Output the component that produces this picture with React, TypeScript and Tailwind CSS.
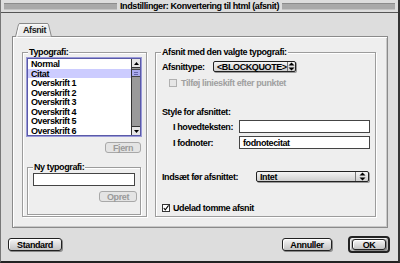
import React from "react";

const T = "text-[9px] font-bold tracking-[-0.4px] leading-[10px] whitespace-nowrap";

function Arrows() {
  return (
    <svg width="7" height="9" viewBox="0 0 7 9">
      <path d="M3.5 0.5 L6.5 3.5 L0.5 3.5 Z" fill="#000" />
      <path d="M3.5 8.5 L6.5 5.5 L0.5 5.5 Z" fill="#000" />
    </svg>
  );
}

function Popup({ cls, text }: { cls: string; text: string }) {
  return (
    <div className={`${cls} h-[11px] flex items-stretch rounded-[2px] border border-[#222] bg-gradient-to-b from-[#f4f4f4] to-[#cfcfcf] shadow-[1px_1px_0_#999]`}>
      <div className={`${T} flex-1 pl-[3px] flex items-center`}>{text}</div>
      <div className="w-[13px] border-l border-[#777] flex items-center justify-center">
        <Arrows />
      </div>
    </div>
  );
}

function Btn({ cls, text, disabled }: { cls: string; text: string; disabled?: boolean }) {
  return (
    <div
      className={`${cls} ${T} flex items-center justify-center rounded-[3px] border ${
        disabled
          ? "border-[#a8a8a8] text-[#9a9a9a] bg-[#e4e4e4]"
          : "border-[#222] text-black bg-gradient-to-b from-[#f6f6f6] to-[#c4c4c4] shadow-[1px_1px_0_#888,inset_1px_1px_0_#fff]"
      }`}
    >
      {text}
    </div>
  );
}

function Group({ cls, label, children }: { cls: string; label: string; children?: React.ReactNode }) {
  return (
    <div className={`${cls} flex flex-col border border-[#9c9c9c] shadow-[1px_1px_0_#fff,inset_1px_1px_0_#fff]`}>
      <div className={`${T} -mt-[6px] ml-[5px] px-[1px] self-start bg-[#eeeeee]`}>{label}</div>
      {children}
    </div>
  );
}

const items = ["Normal", "Citat", "Overskrift 1", "Overskrift 2", "Overskrift 3", "Overskrift 4", "Overskrift 5", "Overskrift 6"];

export default function App() {
  return (
    <div className="w-[400px] h-[263px] bg-[#dddddd] flex flex-col border-l border-l-[#777] border-r-2 border-r-[#333] border-b-2 border-b-[#222] [font-family:'Liberation_Sans',Arial,sans-serif] text-black overflow-hidden">
      {/* title bar */}
      <div className="h-[13px] shrink-0 flex items-center border-b border-[#555] px-[3px]">
        <div className="flex-1 h-[7px] bg-[#a9a9a9] border-t border-[#8c8c8c] border-b border-b-[#c4c4c4]" />
        <div className={`${T} px-[3px]`}>Indstillinger: Konvertering til html (afsnit)</div>
        <div className="flex-1 h-[7px] bg-[#a9a9a9] border-t border-[#8c8c8c] border-b border-b-[#c4c4c4]" />
      </div>

      {/* tab */}
      <div className="mt-[10px] ml-[14px] h-[14px] flex relative z-10 -mb-[1px]">
        <div className="relative w-[37px] h-[14px] flex items-center justify-center">
          <svg className="absolute inset-0" width="37" height="14" viewBox="0 0 37 14">
            <path d="M0.5 14 L3.5 1.5 Q3.8 0.5 5 0.5 L32 0.5 Q33.2 0.5 33.5 1.5 L36.5 14 Z" fill="#eeeeee" stroke="#888" />
            <path d="M1.8 14 L4.5 2.2 L32 1.5" fill="none" stroke="#fff" />
          </svg>
          <span className={`${T} relative text-[#222] pl-[2px]`}>Afsnit</span>
        </div>
      </div>

      {/* panel */}
      <div className="ml-[11px] w-[376px] h-[192px] bg-[#eeeeee] border border-[#8a8a8a] shadow-[inset_1px_1px_0_#fff,inset_-1px_-1px_0_#c8c8c8] flex gap-[8px] pl-[9px] pt-[15px]">
        {/* left group */}
        <Group cls="w-[125px] h-[165px]" label="Typografi:">
          <div className="mt-[1px] ml-[4px] w-[114px] h-[78px] border border-[#5a5aa8] shadow-[0_0_0_1px_#9a9ad8] bg-white flex">
            <div className="flex-1 flex flex-col">
              {items.map((it) => (
                <div key={it} className={`${T} h-[9.5px] leading-[9.5px] pl-[3px] ${it === "Citat" ? "bg-[#ccccff]" : ""}`}>
                  {it}
                </div>
              ))}
            </div>
            <div className="w-[9px] flex flex-col border-l border-[#333] bg-[#9a9a9a]">
              <div className="h-[9px] bg-[#e6e6e6] border-b border-[#333] flex items-center justify-center">
                <svg width="5" height="3" viewBox="0 0 5 3"><path d="M2.5 0 L5 3 L0 3 Z" fill="#000" /></svg>
              </div>
              <div className="mt-[1px] h-[8px] mx-[0px] bg-[#aaaaee] border-y border-[#444] flex flex-col justify-center items-center gap-[1px]">
                <div className="w-[4px] h-px bg-[#6666aa]" />
                <div className="w-[4px] h-px bg-[#6666aa]" />
              </div>
              <div className="flex-1" />
              <div className="h-[9px] bg-[#e6e6e6] border-t border-[#333] flex items-center justify-center">
                <svg width="5" height="3" viewBox="0 0 5 3"><path d="M0 0 L5 0 L2.5 3 Z" fill="#000" /></svg>
              </div>
            </div>
          </div>
          <div className="mt-[6px] flex justify-end pr-[5px]">
            <Btn cls="w-[36px] h-[11px]" text="Fjern" disabled />
          </div>
          <Group cls="mt-[14px] ml-[4px] w-[114px] h-[48px]" label="Ny typografi:">
            <div className="mt-[1px] ml-[5px] w-[102px] h-[13px] bg-white border border-[#444]" />
            <div className="mt-[5px] flex justify-end pr-[3px]">
              <Btn cls="w-[38px] h-[11px]" text="Opret" disabled />
            </div>
          </Group>
        </Group>

        {/* right group */}
        <Group cls="w-[221px] h-[165px]" label="Afsnit med den valgte typografi:">
          <div className="mt-[4px] pl-[6px] flex items-center">
            <div className={`${T} w-[51px]`}>Afsnittype:</div>
            <Popup cls="w-[83px]" text="<BLOCKQUOTE>" />
          </div>
          <div className="mt-[6px] pl-[13px] flex items-center gap-[4px]">
            <div className="w-[8px] h-[8px] border border-[#b0b0b0] bg-[#e6e6e6]" />
            <div className={`${T} text-[#a0a0a0]`}>Tilføj linieskift efter punktet</div>
          </div>
          <div className={`${T} mt-[19px] pl-[6px]`}>Style for afsnittet:</div>
          <div className="mt-[3px] pl-[17px] flex items-center">
            <div className={`${T} w-[66px]`}>I hovedteksten:</div>
            <div className="w-[131px] h-[13px] bg-white border border-[#444]" />
          </div>
          <div className="mt-[3px] pl-[17px] flex items-center">
            <div className={`${T} w-[66px]`}>I fodnoter:</div>
            <div className={`${T} w-[131px] h-[13px] bg-white border border-[#444] pl-[3px] flex items-center`}>fodnotecitat</div>
          </div>
          <div className="mt-[22px] pl-[6px] flex items-center">
            <div className={`${T} w-[94px]`}>Indsæt før afsnittet:</div>
            <Popup cls="w-[113px]" text="Intet" />
          </div>
          <div className="mt-[21px] pl-[6px] flex items-center gap-[3px]">
            <div className="w-[8px] h-[8px] border border-[#333] bg-white flex items-center justify-center">
              <svg width="8" height="8" viewBox="0 0 8 8">
                <path d="M1 4 L3 6.5 L7.5 0.5" fill="none" stroke="#000" strokeWidth="1.4" />
              </svg>
            </div>
            <div className={T}>Udelad tomme afsnit</div>
          </div>
        </Group>
      </div>

      {/* bottom buttons */}
      <div className="mt-[8px] flex items-center pl-[7px] pr-[8px]">
        <Btn cls="w-[54px] h-[13px]" text="Standard" />
        <div className="flex-1" />
        <Btn cls="w-[50px] h-[13px]" text="Annuller" />
        <div className="ml-[16px] w-[42px] h-[17px] rounded-[4px] border-2 border-[#222] bg-[#bcbcbc] flex items-center justify-center shadow-[inset_1px_1px_0_#eee]">
          <Btn cls="w-[34px] h-[11px]" text="OK" />
        </div>
      </div>
    </div>
  );
}
